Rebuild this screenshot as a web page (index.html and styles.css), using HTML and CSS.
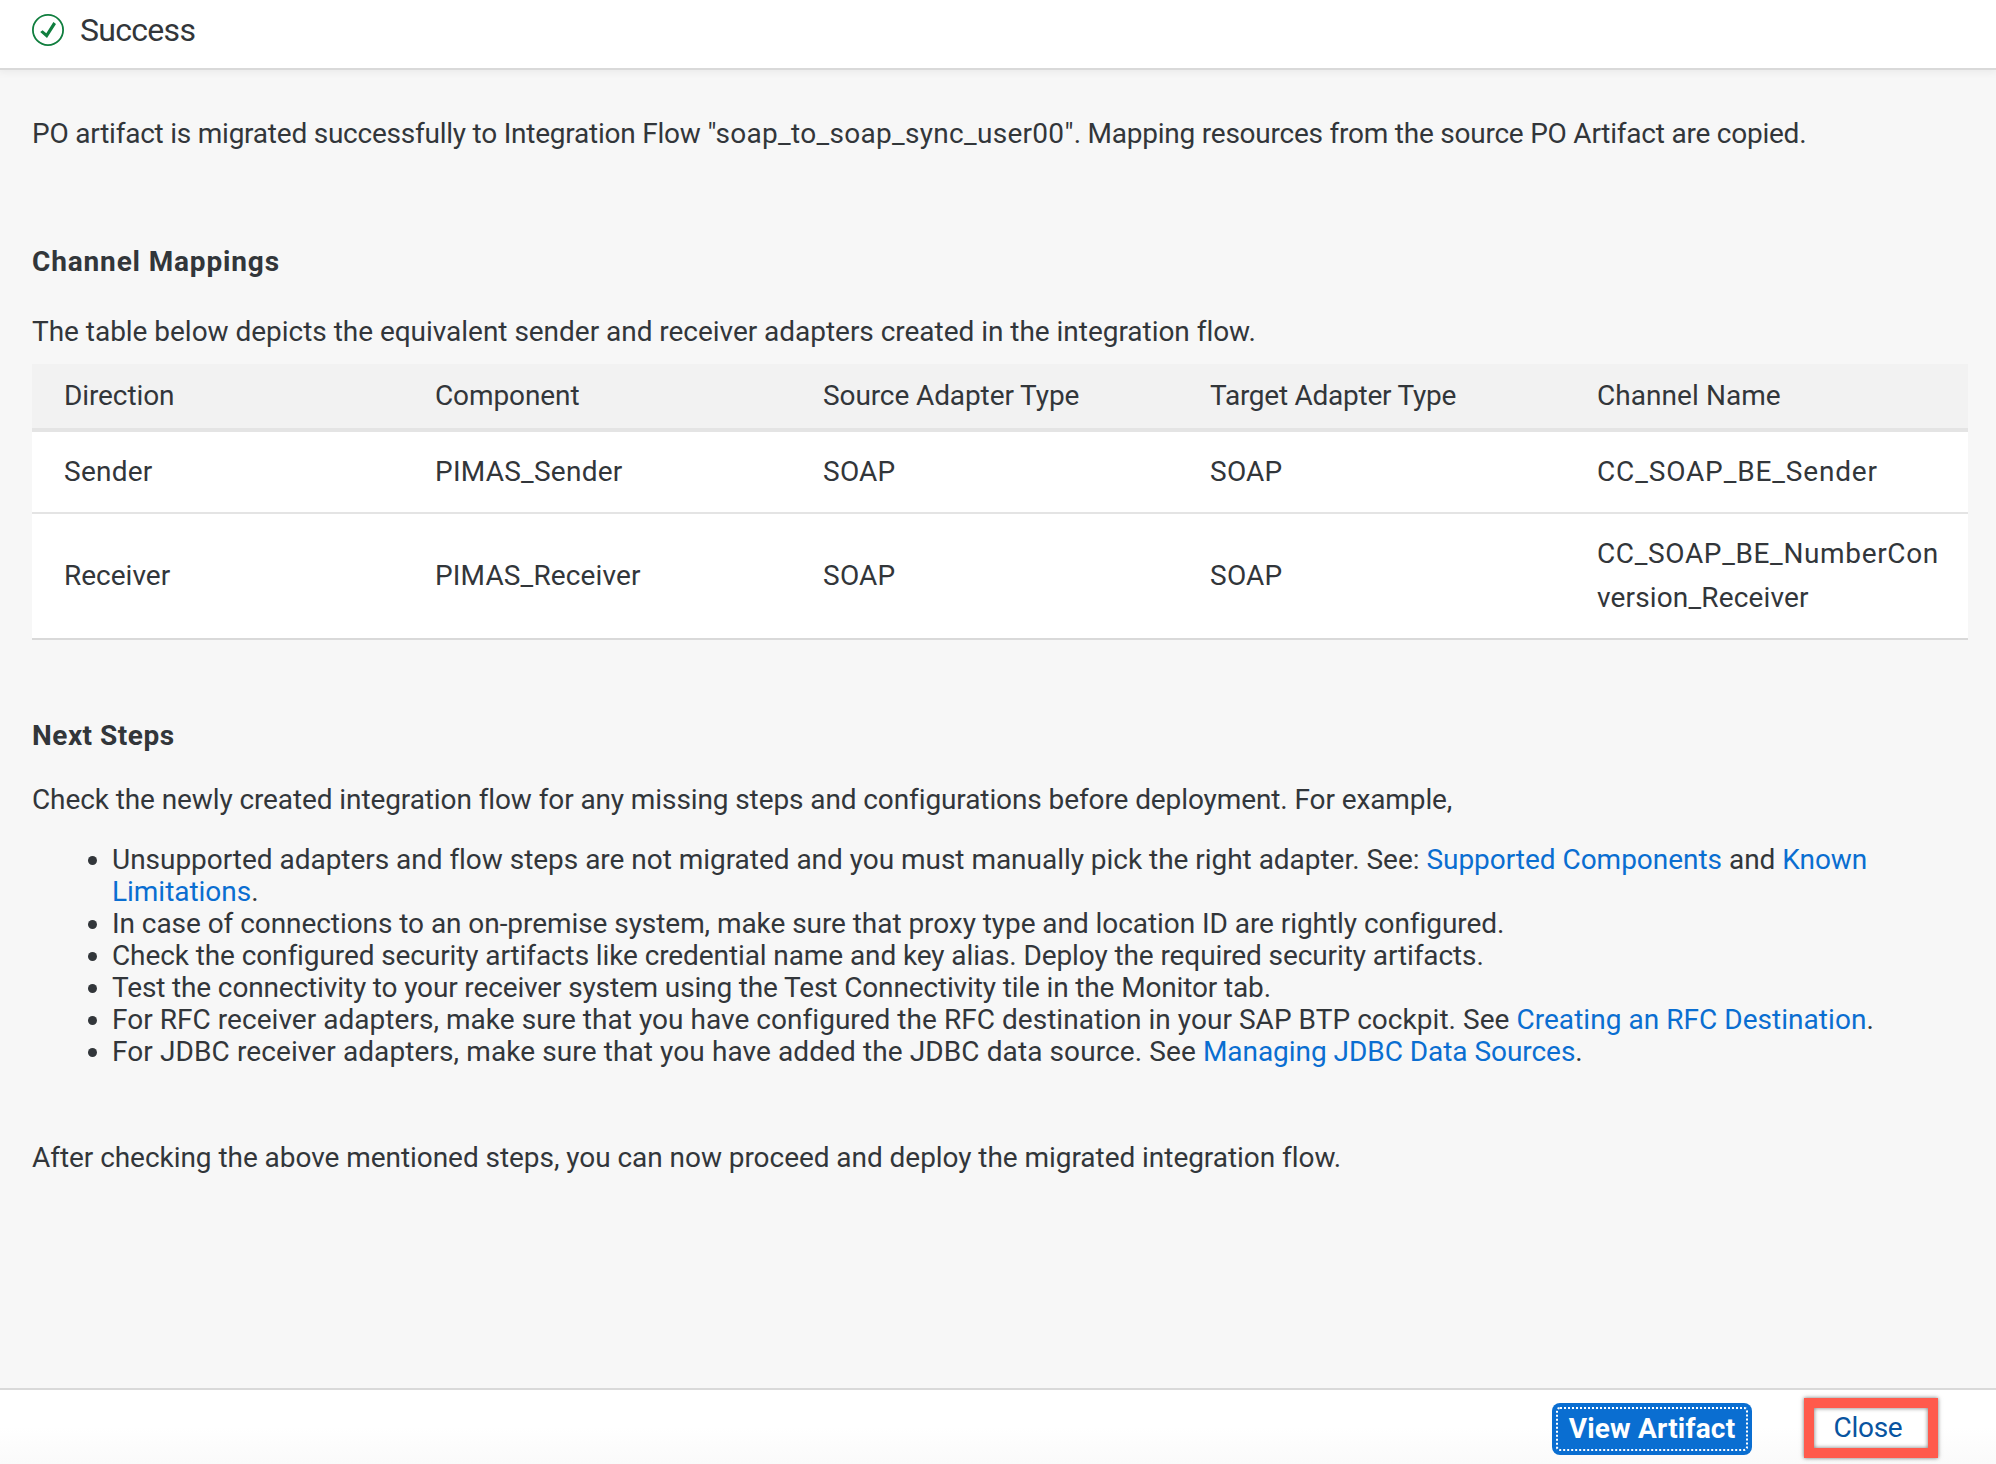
FILE: index.html
```
<!DOCTYPE html>
<html lang="en">
<head>
<meta charset="utf-8">
<title>Success</title>
<link rel="stylesheet" href="styles.css">
</head>
<body>
<div class="dialog">
  <header class="dialog-header">
    <svg class="status-icon" viewBox="0 0 32 32" aria-hidden="true">
      <circle cx="16" cy="16" r="15.1" fill="none" stroke="#107e3e" stroke-width="1.8"/>
      <path d="M8.2 17.9 10.6 16.2 14.3 19.2 21.4 8.1 24 9.9 15 24.1Z" fill="#107e3e"/>
    </svg>
    <h1 class="dialog-title">Success</h1>
  </header>

  <main class="dialog-body">
    <p class="message">PO artifact is migrated successfully to Integration Flow <span class="flow-name">"soap_to_soap_sync_user00"</span>. Mapping resources from the source PO Artifact are copied.</p>

    <h2 class="section-title mappings-title">Channel Mappings</h2>
    <p class="table-intro">The table below depicts the equivalent sender and receiver adapters created in the integration flow.</p>
    <table class="mappings">
      <colgroup><col class="col-direction"><col class="col-component"><col class="col-data"><col class="col-data"><col></colgroup>
      <thead>
        <tr><th>Direction</th><th>Component</th><th>Source Adapter Type</th><th class="tight">Target Adapter Type</th><th>Channel Name</th></tr>
      </thead>
      <tbody>
        <tr><td class="wide">Sender</td><td class="wide">PIMAS_Sender</td><td class="wide">SOAP</td><td class="wide">SOAP</td><td class="channel">CC_SOAP_BE_Sender</td></tr>
        <tr class="tall"><td>Receiver</td><td class="receiver">PIMAS_Receiver</td><td class="wide">SOAP</td><td class="wide">SOAP</td><td class="receiver"><span class="channel-long">CC_SOAP_BE_NumberCon</span><br>version_Receiver</td></tr>
      </tbody>
    </table>

    <h2 class="section-title steps-title">Next Steps</h2>
    <p class="steps-intro">Check the newly created integration flow for any missing steps and configurations before deployment. For example,</p>
    <ul class="steps">
      <li class="step-adapters">Unsupported adapters and flow steps are not migrated and you must manually pick the right adapter. See: <a>Supported Components</a> and <a>Known<br>Limitations</a>.</li>
      <li class="step-premise">In case of connections to an on-premise system, make sure that proxy type and location ID are rightly configured.</li>
      <li class="step-security">Check the configured security artifacts like credential name and key alias. Deploy the required security artifacts.</li>
      <li class="step-test">Test the connectivity to your receiver system using the Test Connectivity tile in the Monitor tab.</li>
      <li class="step-rfc">For RFC receiver adapters, make sure that you have configured the RFC destination in your SAP BTP cockpit. See <a>Creating an RFC Destination</a>.</li>
      <li class="step-jdbc">For JDBC receiver adapters, make sure that you have added the JDBC data source. See <a>Managing JDBC Data Sources</a>.</li>
    </ul>
    <p class="closing">After checking the above mentioned steps, you can now proceed and deploy the migrated integration flow.</p>
  </main>

  <footer class="dialog-footer">
    <button class="btn btn-primary"><span class="focus-ring">View Artifact</span></button>
    <button class="btn btn-close">Close</button>
  </footer>
</div>
</body>
</html>
```

FILE: styles.css
```
* { box-sizing: border-box; }

body {
  margin: 0;
  font-family: Roboto, "Liberation Sans", sans-serif;
  font-size: 28px;
  line-height: 32px;
  color: #32363a;
  background: #f7f7f7;
}

h1, h2, p, ul { margin: 0; }

.dialog {
  display: flex;
  flex-direction: column;
  width: 1996px;
  height: 1464px;
  overflow: hidden;
}

.dialog-header {
  display: flex;
  align-items: flex-start;
  gap: 16px;
  flex: none;
  height: 70px;
  padding: 14px 32px 0;
  background: #fff;
  border-bottom: 2px solid #d9d9d9;
  box-shadow: 0 0 8px 2px rgba(0, 0, 0, 0.06);
}

.status-icon { width: 32px; height: 32px; }

.dialog-title {
  font-size: 32px;
  font-weight: 400;
  letter-spacing: -0.7px;
}

.dialog-body {
  flex: 1;
  padding: 48px 28px 0 32px;
  white-space: nowrap;
}

.message { letter-spacing: -0.23px; }
.flow-name { letter-spacing: 0.3px; }

.section-title { font-size: 28px; font-weight: 700; }
.mappings-title { margin-top: 96px; letter-spacing: 0.85px; }
.table-intro { margin-top: 38px; letter-spacing: -0.03px; }

.mappings {
  width: 1936px;
  margin-top: 16px;
  table-layout: fixed;
  border-collapse: separate;
  border-spacing: 0;
  background: #fff;
  line-height: 44px;
}

.col-direction { width: 371px; }
.col-component { width: 388px; }
.col-data { width: 387px; }

.mappings th,
.mappings td {
  padding: 0 0 0 32px;
  text-align: left;
  vertical-align: middle;
  font-weight: 400;
}

.mappings th {
  height: 68px;
  background: #f2f2f2;
  border-bottom: 4px solid #e4e4e4;
  letter-spacing: -0.1px;
}

.mappings th:last-child { letter-spacing: 0.06px; }
.mappings td { height: 82px; border-bottom: 2px solid #e4e4e4; }
.mappings .tall td { height: 126px; border-bottom-color: #d9d9d9; }
.mappings .tight { letter-spacing: -0.25px; }
.mappings .wide { letter-spacing: 0.25px; }
.mappings .receiver { letter-spacing: 0.15px; }
.mappings .channel { letter-spacing: 0.86px; }
.mappings .channel-long { letter-spacing: 0.65px; }

.steps-title { margin-top: 80px; letter-spacing: 0.5px; }
.steps-intro { margin-top: 32px; letter-spacing: -0.1px; }

.steps { margin-top: 28px; padding-left: 80px; }
.steps a { color: #0a6ed1; }
.step-adapters { letter-spacing: -0.03px; }
.step-premise { letter-spacing: -0.06px; }
.step-security { letter-spacing: -0.1px; }
.step-test { letter-spacing: -0.14px; }
.step-rfc { letter-spacing: 0.04px; }
.step-jdbc { letter-spacing: 0.1px; }
.step-jdbc a { letter-spacing: -0.05px; }

.closing { margin-top: 74px; letter-spacing: -0.05px; }

.dialog-footer {
  display: flex;
  justify-content: flex-end;
  align-items: flex-start;
  gap: 52px;
  flex: none;
  height: 76px;
  padding: 8px 58px 0 0;
  background: linear-gradient(#fff 50%, #fafafa);
  border-top: 2px solid #d9d9d9;
}

.btn {
  margin: 0;
  border: 0;
  font-family: inherit;
  font-size: 28px;
  line-height: 40px;
  white-space: nowrap;
}

.btn-primary {
  width: 200px;
  height: 52px;
  margin-top: 5px;
  padding: 4px;
  border-radius: 8px;
  background: #0a6ed1;
  color: #fff;
  font-weight: 700;
  letter-spacing: 0.2px;
}

.focus-ring {
  display: block;
  height: 44px;
  border: 2px dotted #fff;
  border-radius: 4px;
}

.btn-close {
  width: 134px;
  height: 60px;
  padding: 0 6px 0 0;
  border: 10px solid #ff5a4c;
  background: #fff;
  color: #0854a0;
  letter-spacing: -0.3px;
  box-shadow: 0 0 4px rgba(0, 0, 0, 0.55), inset 0 0 4px rgba(0, 0, 0, 0.55);
}
```
